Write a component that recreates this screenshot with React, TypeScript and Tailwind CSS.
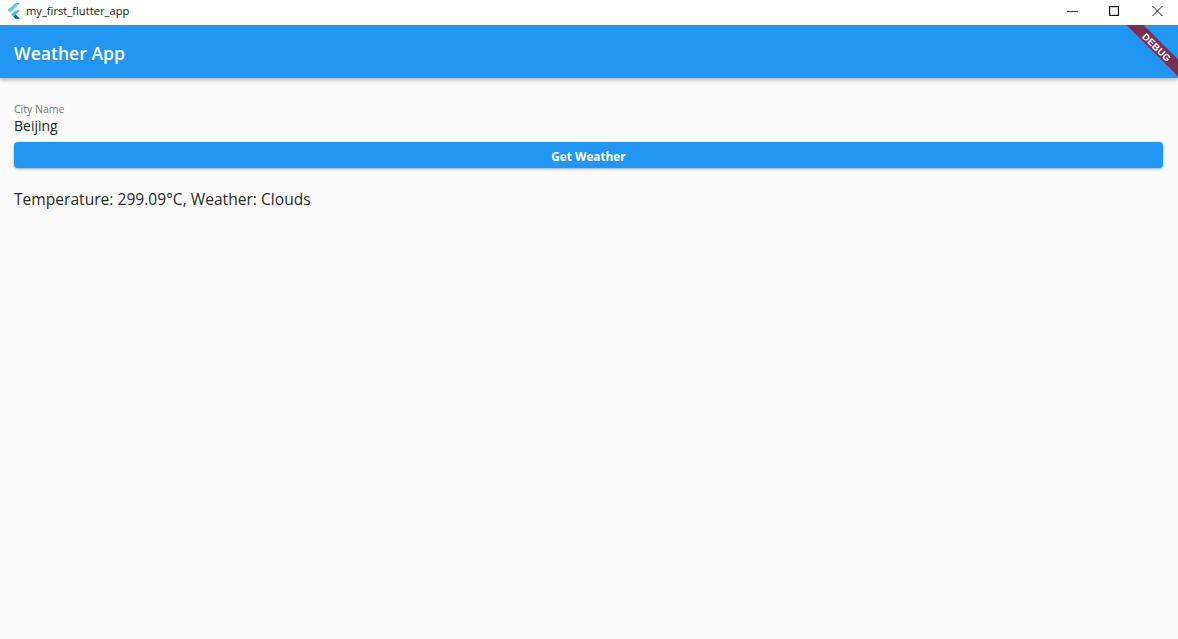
function FlutterLogo() {
  return (
    <svg width="14" height="16" viewBox="0 0 14 16">
      <path d="M8.4 0h4.8L3.2 9.4.6 7.2z" fill="#5ac8f5" />
      <path d="M13.2 7.4H8.4L4 11.4l2.5 2.3z" fill="#45c0ef" />
      <path d="M6.5 13.7 8.4 15.8h4.8L8.6 11.6z" fill="#0d5a9c" />
    </svg>
  );
}

function WindowButtons() {
  return (
    <div className="ml-auto flex items-center pr-[15px] -mt-[4px]">
      <svg width="11" height="10" viewBox="0 0 11 10">
        <path d="M0 5.5h11" stroke="#444" strokeWidth="1.2" />
      </svg>
      <svg className="ml-[31px]" width="10" height="10" viewBox="0 0 10 10">
        <rect x="0.6" y="0.6" width="8.8" height="8.8" fill="none" stroke="#111" strokeWidth="1.2" />
      </svg>
      <svg className="ml-[33px]" width="11" height="10" viewBox="0 0 11 10">
        <path d="M0.5 0 10.5 10M10.5 0 .5 10" stroke="#222" strokeWidth="1" />
      </svg>
    </div>
  );
}

export default function App() {
  return (
    <div className="relative flex flex-col h-[639px] overflow-hidden bg-[#fbfbfb] font-['Open_Sans','Noto_Sans',sans-serif]">
      <div className="h-[25px] bg-white flex items-center shrink-0">
        <div className="pl-[7px] pr-[5px] flex items-center -mt-[3px]">
          <FlutterLogo />
        </div>
        <span className="text-[11.2px] text-[#1a1a1a] -mt-[3px]">my_first_flutter_app</span>
        <WindowButtons />
      </div>

      <div className="h-[53px] bg-[#2196f3] shadow-[0_2px_4px_rgba(0,0,0,0.28)] flex items-center px-[14px] shrink-0 z-10">
        <h1 className="text-[17.6px] font-semibold text-white leading-none mt-[5px]">Weather App</h1>
      </div>

      <div className="flex flex-col pl-[14px] pr-[15px] pt-[25px]">
        <label className="text-[10.5px] leading-[13px] text-[#777]">City Name</label>
        <div className="text-[14px] leading-[20px] text-[#222]">Beijing</div>
        <button className="mt-[6px] h-[26px] pt-[3px] rounded-[4px] bg-[#2196f3] shadow-[0_1px_3px_rgba(0,0,0,0.35)] text-white text-[11.8px] font-bold">
          Get Weather
        </button>
        <p className="mt-[20px] text-[15.6px] leading-[22px] text-[#2a2a2a]">Temperature: 299.09°C, Weather: Clouds</p>
      </div>

      <div className="absolute top-[25px] right-0 w-[53px] h-[53px] overflow-hidden z-20 pointer-events-none">
        <div className="absolute top-[15px] left-[-7px] w-[76px] h-[12px] pl-[3px] pt-[1px] rotate-45 bg-[#7a2f50] flex items-center justify-center text-white text-[9.5px] font-black tracking-[0.3px] leading-none font-['Liberation_Sans',sans-serif]">
          DEBUG
        </div>
      </div>
    </div>
  );
}
